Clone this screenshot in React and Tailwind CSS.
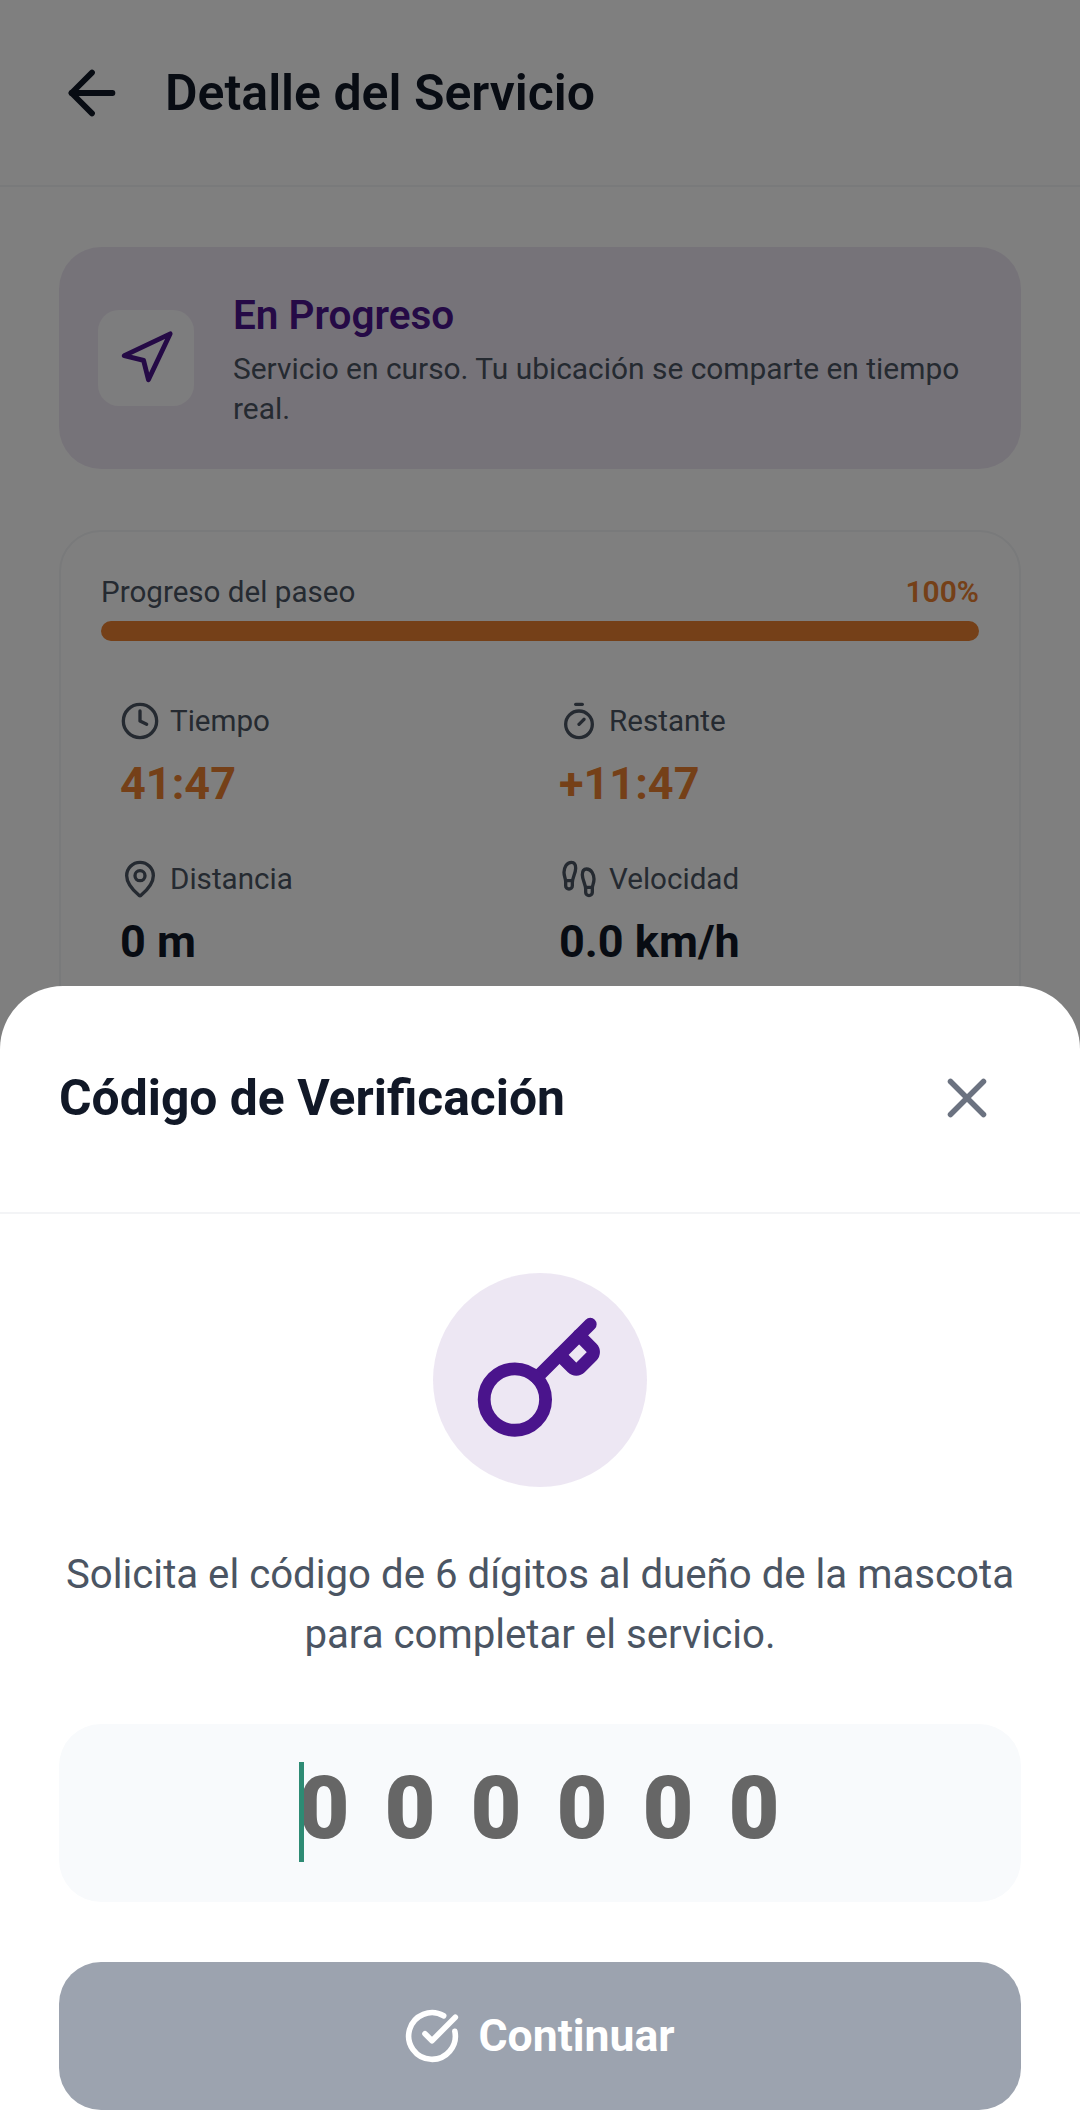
import React from "react";
import { ArrowLeft, Navigation, Clock, Timer, MapPin, Footprints, X, Key, CircleCheckBig } from "lucide-react";

function Stat({ Icon, label, value, orange }) {
  return (
    <div className="px-[19px] pb-[24px] h-[158px]">
      <div className="flex items-center gap-[10px] h-[42px] text-[#4b5563]">
        <Icon size={40} strokeWidth={2} className="shrink-0" />
        <span className="text-[29.6px] leading-[42px]">{label}</span>
      </div>
      <div className={`mt-[14px] text-[45px] leading-[56px] font-bold ${orange ? "text-[#ea8030]" : "text-[#111827]"}`}>
        {value}
      </div>
    </div>
  );
}

export default function App() {
  return (
    <div className="relative w-[1080px] h-[2113px] overflow-hidden bg-white font-['Roboto',sans-serif]">
      <header className="flex items-center h-[187px] border-b-[2px] border-[#f3f4f6] pl-[57px]">
        <ArrowLeft size={70} strokeWidth={2} className="text-[#111827]" />
        <h1 className="ml-[38px] mt-[2px] text-[50px] font-semibold text-[#111827]">Detalle del Servicio</h1>
      </header>

      <main className="px-[59px] pt-[60px]">
        <section className="flex items-center h-[222px] rounded-[42px] bg-[#4a148c]/10 pl-[39px] pr-[42px]">
          <div className="flex items-center justify-center w-[96px] h-[96px] rounded-[21px] bg-white/80 shrink-0">
            <Navigation size={58} strokeWidth={2} className="text-[#4a148c] -ml-[1px] -mt-[1px]" />
          </div>
          <div className="ml-[39px] mt-[3px]">
            <div className="text-[40.5px] leading-[50px] font-semibold text-[#4a148c]">En Progreso</div>
            <p className="mt-[9px] text-[29.9px] leading-[40px] text-[#4b5563]">
              Servicio en curso. Tu ubicación se comparte en tiempo real.
            </p>
          </div>
        </section>

        <section className="mt-[61px] h-[600px] rounded-[42px] border-[2px] border-[#f3f4f6] px-[40px] pt-[39px]">
          <div className="flex items-center justify-between h-[42px]">
            <span className="text-[29.6px] text-[#4b5563]">Progreso del paseo</span>
            <span className="text-[30px] font-semibold text-[#ea8030] -mt-[1px]">100%</span>
          </div>
          <div className="mt-[8px] h-[20px] rounded-full bg-[#ea8030]" />
          <div className="mt-[59px] grid grid-cols-2">
            <Stat Icon={Clock} label="Tiempo" value="41:47" orange />
            <Stat Icon={Timer} label="Restante" value="+11:47" orange />
            <Stat Icon={MapPin} label="Distancia" value="0 m" />
            <Stat Icon={Footprints} label="Velocidad" value="0.0 km/h" />
          </div>
        </section>
      </main>

      <div className="absolute inset-0 bg-black/50" />

      <div className="absolute left-0 right-0 bottom-0 h-[1127px] bg-white rounded-t-[63px]">
        <div className="flex items-center justify-between h-[228px] border-b-[2px] border-[#f3f4f6] pl-[59px] pr-[80px]">
          <h2 className="text-[49.8px] font-bold text-[#111827] -mt-[1px]">Código de Verificación</h2>
          <X size={66} strokeWidth={2} className="text-[#6b7280] -mt-[2px]" />
        </div>
        <div className="flex flex-col items-center px-[59px] pt-[59px]">
          <div className="flex items-center justify-center w-[214px] h-[214px] rounded-full bg-[#4a148c]/10">
            <Key size={134} strokeWidth={2.3} className="text-[#4a148c] -ml-[1px]" />
          </div>
          <p className="mt-[58px] w-full text-center text-[40.2px] leading-[60px] text-[#4b5563]">
            Solicita el código de 6 dígitos al dueño de la mascota para completar el servicio.
          </p>
          <div className="relative mt-[59px] flex items-center justify-center w-full h-[178px] rounded-[42px] bg-[#f8fafc]">
            <span className="text-[88px] leading-none font-black text-[#666666] tracking-[35px] ml-[33px] -mt-[11px]">000000</span>
            <span className="absolute left-[240px] top-[38px] w-[5px] h-[100px] bg-[#2e8b74]" />
          </div>
          <button className="mt-[60px] flex items-center justify-center gap-[19px] w-full h-[148px] rounded-[42px] bg-[#9ca3af] text-white">
            <CircleCheckBig size={56} strokeWidth={2.4} className="-ml-[2px]" />
            <span className="text-[44.5px] font-bold">Continuar</span>
          </button>
        </div>
      </div>
    </div>
  );
}
